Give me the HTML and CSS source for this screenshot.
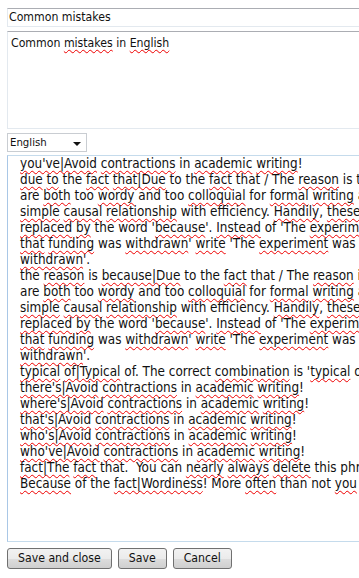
FILE: index.html
```html
<!DOCTYPE html>
<html>
<head>
<meta charset="utf-8">
<link rel="stylesheet" href="styles.css">
</head>
<body>
<div class="page">
  <div class="field title">Common mistakes</div>
  <div class="field desc">Common <span class="sp">mistakes</span> in <span class="sp">English</span></div>
  <div class="select"><span>English</span><span class="arrow"></span></div>
  <div class="editor">
    <div class="ln"><span class="sp">you've|Avoid</span> <span class="sp">contractions</span> in <span class="sp">academic</span> <span class="sp">writing</span>!</div>
    <div class="ln"><span class="sp">due</span> <span class="sp">to</span> the <span class="sp">fact</span> <span class="sp">that|Due</span> to the <span class="sp">fact</span> that / The <span class="sp">reason</span> is that experiments</div>
    <div class="ln">are <span class="sp">both</span> too <span class="sp">wordy</span> and too <span class="sp">colloquial</span> for <span class="sp">formal</span> <span class="sp">writing</span> and</div>
    <div class="ln"><span class="sp">simple</span> <span class="sp">causal</span> <span class="sp">relationship</span> with efficiency. <span class="sp">Handily</span>, <span class="sp">these</span> can</div>
    <div class="ln"><span class="sp">replaced</span> <span class="sp">by</span> the word '<span class="sp">because</span>'. <span class="sp">Instead</span> of 'The <span class="sp">experiment</span></div>
    <div class="ln"><span class="sp">that</span> <span class="sp">funding</span> was <span class="sp">withdrawn</span>' <span class="sp">write</span> 'The <span class="sp">experiment</span> was ended</div>
    <div class="ln"><span class="sp">withdrawn</span>'.</div>
    <div class="ln">the <span class="sp">reason</span> is <span class="sp">because|Due</span> to the <span class="sp">fact</span> that / The <span class="sp">reason</span> is</div>
    <div class="ln">are <span class="sp">both</span> too <span class="sp">wordy</span> and too <span class="sp">colloquial</span> for <span class="sp">formal</span> <span class="sp">writing</span> and</div>
    <div class="ln"><span class="sp">simple</span> <span class="sp">causal</span> <span class="sp">relationship</span> with efficiency. <span class="sp">Handily</span>, <span class="sp">these</span> can</div>
    <div class="ln"><span class="sp">replaced</span> <span class="sp">by</span> the word '<span class="sp">because</span>'. <span class="sp">Instead</span> of 'The <span class="sp">experiment</span></div>
    <div class="ln"><span class="sp">that</span> <span class="sp">funding</span> was <span class="sp">withdrawn</span>' <span class="sp">write</span> 'The <span class="sp">experiment</span> was ended</div>
    <div class="ln"><span class="sp">withdrawn</span>'.</div>
    <div class="ln"><span class="sp">typical</span> <span class="sp">of|Typical</span> of. The correct <span class="sp">combination</span> is '<span class="sp">typical</span> of'</div>
    <div class="ln"><span class="sp">there's|Avoid</span> <span class="sp">contractions</span> in <span class="sp">academic</span> <span class="sp">writing</span>!</div>
    <div class="ln"><span class="sp">where's|Avoid</span> <span class="sp">contractions</span> in <span class="sp">academic</span> <span class="sp">writing</span>!</div>
    <div class="ln"><span class="sp">that's|Avoid</span> <span class="sp">contractions</span> in <span class="sp">academic</span> <span class="sp">writing</span>!</div>
    <div class="ln"><span class="sp">who's|Avoid</span> <span class="sp">contractions</span> in <span class="sp">academic</span> <span class="sp">writing</span>!</div>
    <div class="ln"><span class="sp">who've|Avoid</span> <span class="sp">contractions</span> in <span class="sp">academic</span> <span class="sp">writing</span>!</div>
    <div class="ln"><span class="sp">fact|The</span> <span class="sp">fact</span> that.&nbsp; You can <span class="sp">nearly</span> <span class="sp">always</span> <span class="sp">delete</span> this phrase</div>
    <div class="ln"><span class="sp">Because</span> of the <span class="sp">fact|Wordiness</span>! More <span class="sp">often</span> than not <span class="sp">you</span> can</div>
  </div>
  <div class="buttons">
    <button class="btn">Save and close</button>
    <button class="btn">Save</button>
    <button class="btn">Cancel</button>
  </div>
</div>
</body>
</html>
```
FILE: styles.css
```css
html, body {
  margin: 0;
  background: #fff;
}
body {
  font-family: "DejaVu Sans Condensed", "DejaVu Sans", sans-serif;
  font-size: 12px;
  color: #111;
}
.page {
  width: 359px;
  height: 578px;
  box-sizing: border-box;
  padding: 8px 0 0 7px;
  overflow: hidden;
}
.field {
  width: 400px;
  box-sizing: border-box;
  border: 1px solid #e3e9ef;
  border-top-color: #abadb3;
  white-space: nowrap;
  font-size: 12.2px;
}
.title {
  height: 19px;
  line-height: 17px;
  padding-left: 1px;
}
.desc {
  margin-top: 4px;
  height: 98px;
  padding: 3px 0 0 3px;
  line-height: 16px;
}
.select {
  margin-top: 4px;
  width: 80px;
  height: 19px;
  box-sizing: border-box;
  border: 1px solid #c9cdd2;
  display: flex;
  align-items: center;
  justify-content: space-between;
  padding: 0 5px 0 2px;
  line-height: 17px;
  font-size: 11.3px;
}
.arrow {
  width: 0;
  height: 0;
  border-left: 4px solid transparent;
  border-right: 4px solid transparent;
  border-top: 4px solid #111;
  margin-top: 2px;
}
.editor {
  margin-top: 3px;
  width: 400px;
  height: 387px;
  box-sizing: border-box;
  border: 1px solid #c5dbec;
  border-left-color: #a9c7e6;
  padding: 0 0 0 12px;
  font-size: 13.4px;
  line-height: 16px;
  overflow: hidden;
}
.ln {
  white-space: nowrap;
}
.sp {
  text-decoration: underline wavy #ee0000;
  text-decoration-thickness: 1px;
  text-decoration-skip-ink: none;
  text-underline-offset: 2px;
}
.buttons {
  margin-top: 6px;
  display: flex;
  gap: 6px;
}
.btn {
  font-family: inherit;
  font-size: 12.2px;
  color: #111;
  height: 21px;
  padding: 0 10px;
  border: 1px solid #707070;
  border-radius: 3px;
  background: linear-gradient(#f2f2f2 0%, #ebebeb 50%, #dddddd 51%, #cfcfcf 100%);
  line-height: 17px;
}
```
